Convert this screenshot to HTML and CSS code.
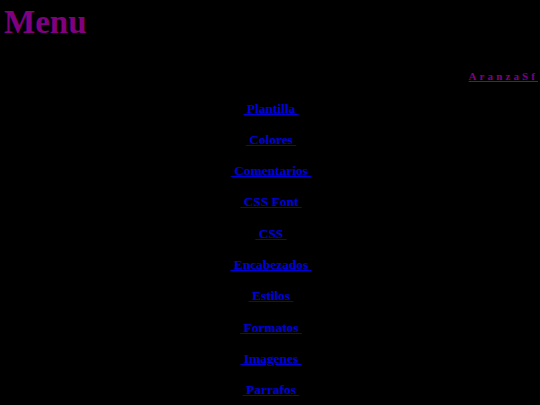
FILE: index.html
```html
<!DOCTYPE html>
<html>
<head>
<meta charset="utf-8">
<link rel="stylesheet" href="styles.css">
</head>
<body>
<h1 class="title">Menu</h1>
<div class="author"><a href="#" class="author-link">AranzaSf</a></div>
<nav class="menu">
<a href="#" class="item">&nbsp;Plantilla&nbsp;</a>
<a href="#" class="item">&nbsp;Colores&nbsp;</a>
<a href="#" class="item">&nbsp;Comentarios&nbsp;</a>
<a href="#" class="item">&nbsp;CSS Font&nbsp;</a>
<a href="#" class="item">&nbsp;CSS&nbsp;</a>
<a href="#" class="item">&nbsp;Encabezados&nbsp;</a>
<a href="#" class="item">&nbsp;Estilos&nbsp;</a>
<a href="#" class="item">&nbsp;Formatos&nbsp;</a>
<a href="#" class="item">&nbsp;Imagenes&nbsp;</a>
<a href="#" class="item">&nbsp;Parrafos&nbsp;</a>
</nav>
</body>
</html>
```
FILE: styles.css
```css
html, body {
  background: #000;
}
body {
  margin: 0;
  padding: 4px 2px 0 4px;
  font-family: "Liberation Serif", "Times New Roman", serif;
}
.title {
  margin: 0;
  font-size: 33px;
  line-height: 37px;
  color: #800080;
  font-weight: bold;
}
.author {
  text-align: right;
  margin-top: 28px;
  font-size: 11px;
  line-height: 14px;
  font-weight: bold;
}
.author-link {
  color: #800080;
  letter-spacing: 3.1px;
}
.menu {
  display: flex;
  flex-direction: column;
  align-items: center;
  margin-top: 9.6px;
}
.item {
  font-size: 13.4px;
  line-height: 31.3px;
  font-weight: bold;
  color: #0000dd;
}
```
